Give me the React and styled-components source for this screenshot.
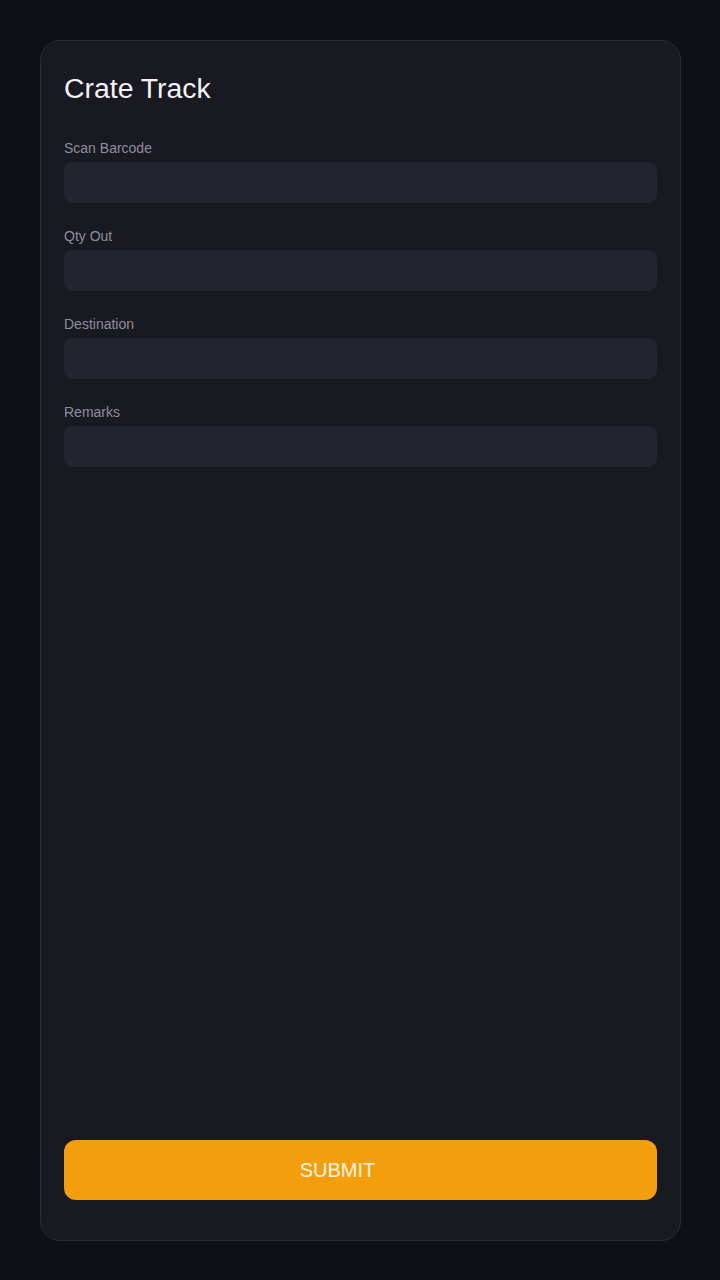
import React from "react";
import styled, { createGlobalStyle } from "styled-components";

const Global = createGlobalStyle`
  html, body { margin: 0; padding: 0; background: #0f1015; }
  body { font-family: "Liberation Sans", Arial, sans-serif; }
  * { box-sizing: border-box; }
`;

const Page = styled.div`
  padding: 40px;
  min-height: 1280px;
`;

const Card = styled.form`
  width: 641px;
  height: 1201px;
  background: #191921;
  border: 1px solid #2c2c38;
  border-radius: 20px;
  padding: 24px 23px;
  display: flex;
  flex-direction: column;
`;

const Title = styled.h1`
  margin: 6px 0 35px;
  font-size: 28.4px;
  line-height: 34px;
  font-weight: 400;
  color: #f2f2f7;
`;

const Fields = styled.div`
  display: flex;
  flex-direction: column;
  gap: 25px;
`;

const Field = styled.label`
  display: flex;
  flex-direction: column;
  gap: 6px;
`;

const LabelText = styled.span`
  font-size: 14px;
  line-height: 16px;
  color: #8d8d9f;
`;

const Input = styled.input`
  height: 41px;
  width: 100%;
  border: none;
  outline: none;
  border-radius: 8px;
  background: #24242f;
  color: #e6e6ee;
  padding: 0 14px;
  font-family: inherit;
  font-size: 16px;
`;

const Spacer = styled.div`
  flex: 1;
`;

const Submit = styled.button`
  height: 60px;
  width: 100%;
  margin-bottom: 16px;
  border: none;
  border-radius: 12px;
  background: #f39f0d;
  color: #fbf3e6;
  font-family: inherit;
  font-size: 20px;
  padding: 0 46px 0 0;
  cursor: pointer;
`;

const fields = ["Scan Barcode", "Qty Out", "Destination", "Remarks"];

export default function App() {
  return (
    <>
      <Global />
      <Page>
        <Card onSubmit={(e) => e.preventDefault()}>
          <Title>Crate Track</Title>
          <Fields>
            {fields.map((f) => (
              <Field key={f}>
                <LabelText>{f}</LabelText>
                <Input type="text" />
              </Field>
            ))}
          </Fields>
          <Spacer />
          <Submit type="submit">SUBMIT</Submit>
        </Card>
      </Page>
    </>
  );
}
